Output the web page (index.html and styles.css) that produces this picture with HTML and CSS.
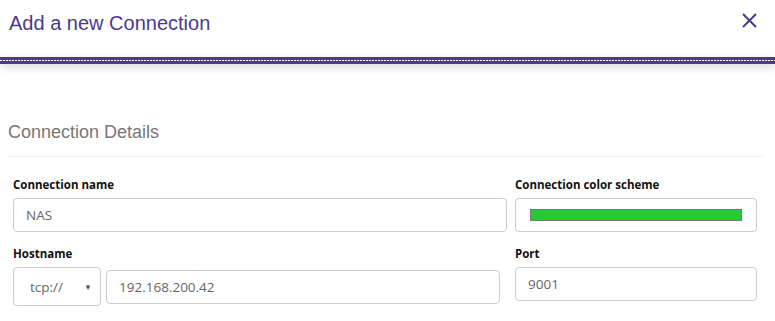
FILE: index.html
```html
<!DOCTYPE html>
<html lang="en">

<head>
  <meta charset="UTF-8" />
  <meta name="viewport" content="width=device-width, initial-scale=1.0" />
  <title>Add a new Connection</title>
  <link rel="stylesheet" href="styles.css">
</head>

<body>
  <div class="modal">
    <div class="modal-header">
      <h2 class="modal-title">Add a new Connection</h2>
      <button class="close" aria-label="Close">
        <svg width="15" height="15" viewBox="0 0 15 15">
          <path d="M1 1L14 14M14 1L1 14" stroke="#4b3a8c" stroke-width="2" fill="none" />
        </svg>
      </button>
    </div>
    <div class="header-line"></div>

    <div class="modal-body">
      <h3 class="section-title">Connection Details</h3>
      <div class="form-grid">
        <div class="form-group">
          <label>Connection name</label>
          <input class="form-control" type="text" value="NAS" />
        </div>
        <div class="form-group">
          <label>Connection color scheme</label>
          <div class="form-control color-picker">
            <span class="color-swatch"></span>
          </div>
        </div>
        <div class="form-group">
          <label>Hostname</label>
          <div class="host-row">
            <div class="select">
              <span>tcp://</span>
              <span class="caret">&#9660;</span>
            </div>
            <input class="form-control host-input" type="text" value="192.168.200.42" />
          </div>
        </div>
        <div class="form-group">
          <label>Port</label>
          <input class="form-control" type="text" value="9001" />
        </div>
      </div>
    </div>
  </div>
</body>

</html>
```

FILE: styles.css
```css
* {
  box-sizing: border-box;
}

body {
  margin: 0;
  background: #fff;
  font-family: "Open Sans", "Noto Sans", sans-serif;
}

.modal-header {
  height: 57px;
  display: flex;
  align-items: flex-start;
  justify-content: space-between;
  padding: 11px 18px 0 9px;
}

.modal-title {
  margin: 0;
  font-family: "Liberation Sans", Arial, sans-serif;
  font-weight: normal;
  font-size: 20px;
  line-height: 24px;
  color: #4b3a8c;
}

.close {
  appearance: none;
  border: none;
  background: none;
  padding: 0;
  margin-top: 2px;
  width: 15px;
  height: 15px;
  cursor: pointer;
}

.close svg {
  display: block;
}

.header-line {
  height: 7px;
  border-top: 3px solid #4b3a8c;
  border-bottom: 3px solid #4b3a8c;
  background: repeating-linear-gradient(90deg, #fff 0 2px, #4b3a8c 2px 3px);
  box-shadow: 0 3px 9px rgba(0, 0, 0, 0.16);
}

.modal-body {
  padding: 0 12px 0 8px;
}

.section-title {
  margin: 0;
  padding: 57px 0 13px;
  font-family: "Liberation Sans", Arial, sans-serif;
  font-weight: normal;
  font-size: 18px;
  line-height: 22px;
  color: #777;
  border-bottom: 1px solid #eee;
}

.form-grid {
  display: grid;
  grid-template-columns: 494px 242px;
  column-gap: 8px;
  row-gap: 14px;
  padding: 20px 0 0 5px;
}

.form-group label {
  display: block;
  font-size: 11.5px;
  font-weight: bold;
  line-height: 16px;
  color: #111;
  margin-bottom: 5px;
}

.form-control {
  display: block;
  width: 100%;
  height: 34px;
  padding: 0 12px;
  border: 1px solid #ccc;
  border-radius: 4px;
  font-family: "Open Sans", "Noto Sans", sans-serif;
  font-size: 13.5px;
  color: #666;
  background: #fff;
  outline: none;
}

.color-picker {
  display: flex;
  align-items: center;
  padding: 0 14px;
}

.color-swatch {
  display: block;
  width: 100%;
  height: 12px;
  background: #22cc33;
  border: 1px solid #777;
}

.host-row {
  display: flex;
  align-items: center;
  gap: 5px;
  padding-right: 7px;
}

.select {
  display: flex;
  align-items: center;
  justify-content: space-between;
  width: 88px;
  height: 39px;
  flex-shrink: 0;
  padding: 0 8px 0 16px;
  border: 1px solid #ccc;
  border-radius: 4px;
  font-size: 13.5px;
  color: #666;
}

.caret {
  font-size: 8px;
  color: #555;
}

.host-input {
  flex: 1;
  width: auto;
}
```
